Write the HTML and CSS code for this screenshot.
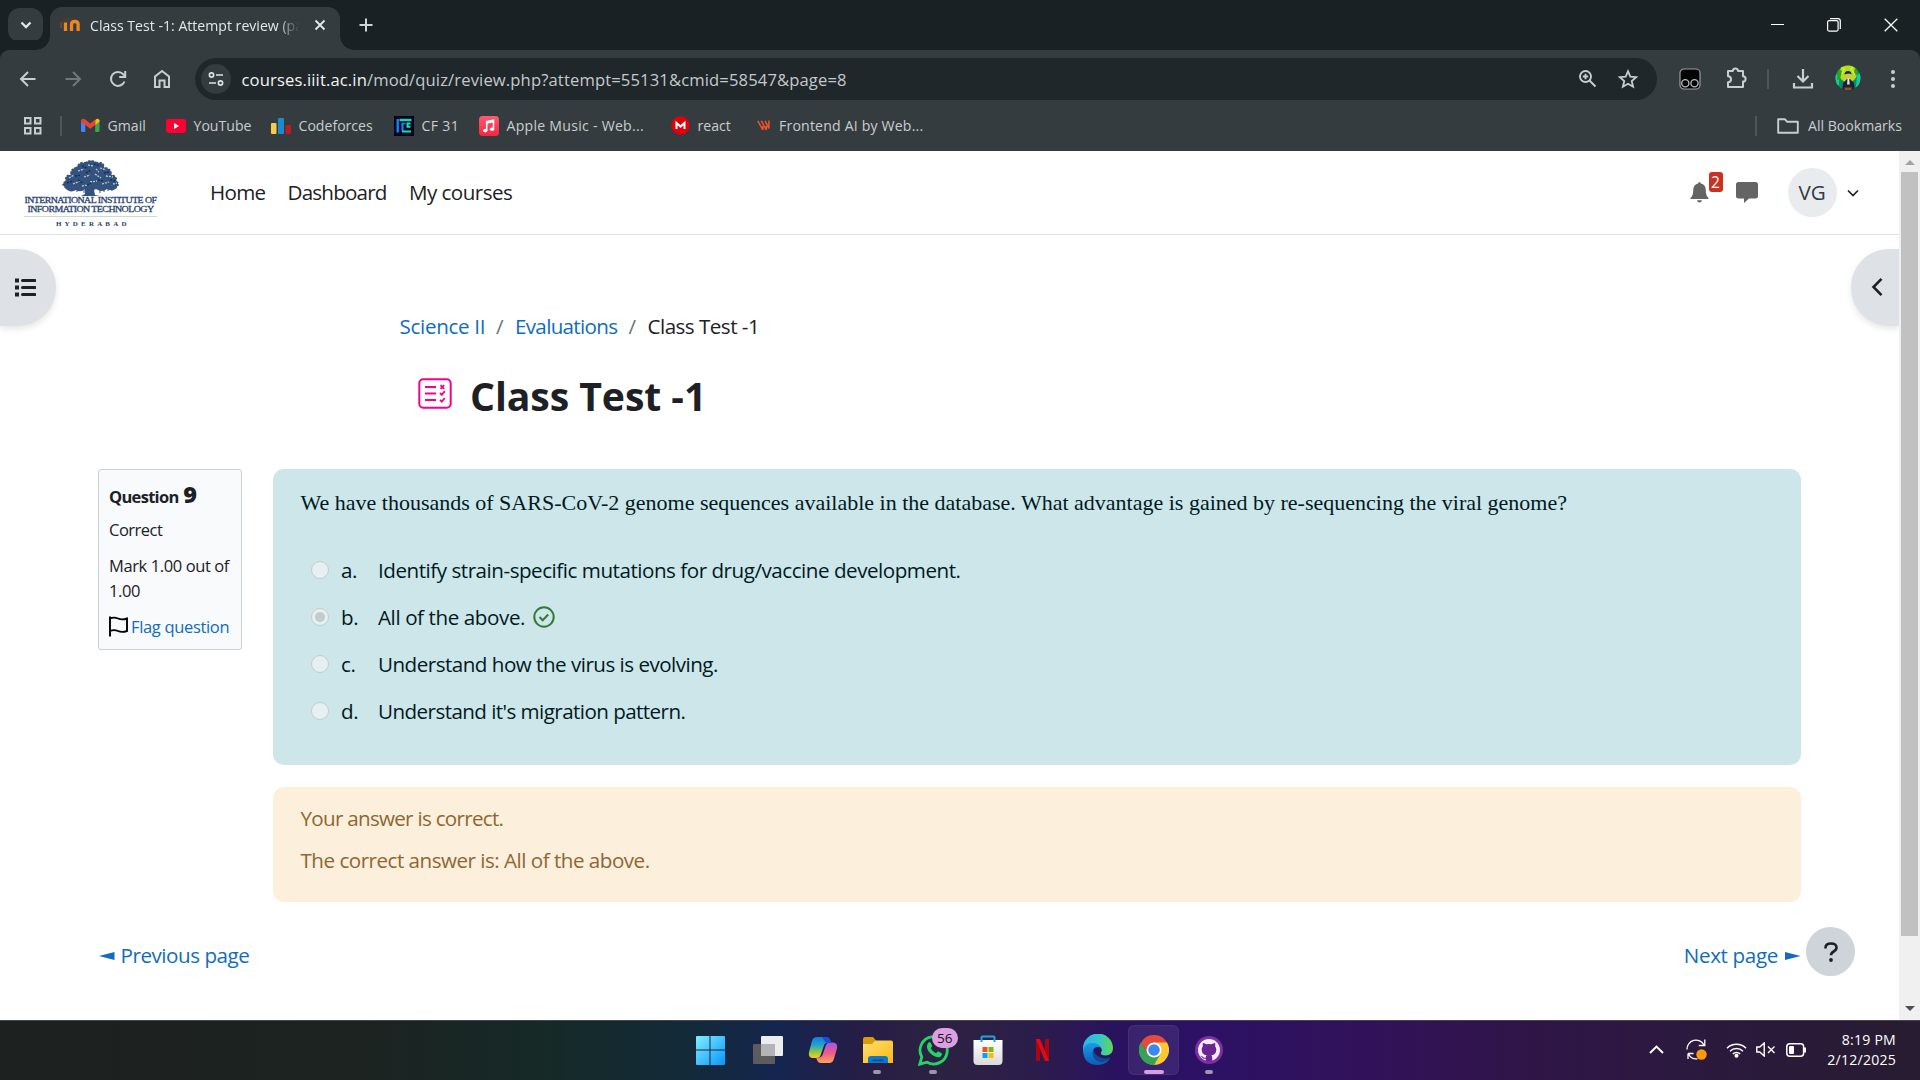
FILE: index.html
```
<!DOCTYPE html>
<html lang="en">
<head>
<meta charset="utf-8">
<title>Class Test -1: Attempt review</title>
<link rel="stylesheet" href="styles.css">
</head>
<body>
<div class="tabstrip">
  <div class="tab-search"><svg width="12" height="8" viewBox="0 0 12 8"><path d="M1.5 1.5L6 6l4.500-4.500" fill="none" stroke="#e3e6e7" stroke-width="2.300"/></svg></div>
  <div class="tab">
    <svg class="favicon" width="21" height="16" viewBox="0 0 21 16"><path d="M0 4.500L7 .5l6 1.500-5 3.500z" fill="#4d3b33"/><path d="M1.200 5v6" stroke="#7a5038" stroke-width="1.200"/><path d="M5.500 14V5.500M11.500 14V7.500q0-3 3.300-3t3.300 3V14" fill="none" stroke="#ef8422" stroke-width="3.300"/></svg>
    <span class="tab-title">Class Test -1: Attempt review (pa</span>
    <svg width="12" height="12" viewBox="0 0 12 12"><path d="M1.500 1.500l9 9m0-9l-9 9" stroke="#e3e6e7" stroke-width="1.900"/></svg>
  </div>
  <svg class="newtab" width="14" height="14" viewBox="0 0 14 14"><path d="M7 .5v13M.5 7h13" stroke="#d0d4d5" stroke-width="2"/></svg>
  <div class="window-buttons">
    <svg width="13" height="13" viewBox="0 0 13 13"><path d="M0 5.500h13" stroke="#fff"/></svg>
    <svg width="14" height="14" viewBox="0 0 14 14"><rect x=".6" y="2.600" width="10.500" height="10.500" rx="1.500" fill="none" stroke="#fff" stroke-width="1.200"/><path d="M3 .7h8q2.300 0 2.300 2.300v8" fill="none" stroke="#fff" stroke-width="1.200"/></svg>
    <svg width="14" height="14" viewBox="0 0 14 14"><path d="M.7.7l12.600 12.600m0-12.600L.7 13.300" stroke="#fff" stroke-width="1.300"/></svg>
  </div>
</div>

<div class="toolbar">
  <div class="nav-icons">
    <svg width="24" height="24" viewBox="0 0 24 24"><path d="M19.500 12H5.500M12 5l-7 7 7 7" fill="none" stroke="#c9cdcf" stroke-width="2"/></svg>
    <svg width="24" height="24" viewBox="0 0 24 24"><path d="M4.500 12h14M12 5l7 7-7 7" fill="none" stroke="#72787b" stroke-width="2"/></svg>
    <svg width="24" height="24" viewBox="0 0 24 24"><path d="M18.500 14.500a7 7 0 1 1-1.300-7.300L19 9" fill="none" stroke="#c9cdcf" stroke-width="2"/><path d="M19.200 4v6h-6" fill="none" stroke="#c9cdcf" stroke-width="2"/></svg>
    <svg width="24" height="24" viewBox="0 0 24 24"><path d="M5 9.500L12 4l7 5.500V20h-4.500v-6.500h-5V20H5z" fill="none" stroke="#c9cdcf" stroke-width="2"/></svg>
  </div>
  <div class="omnibox">
    <span class="site-info"><svg width="16" height="14" viewBox="0 0 16 14"><g fill="none" stroke="#dfe2e3" stroke-width="1.700"><circle cx="3.500" cy="3" r="2.100"/><path d="M8 3h7M1 11h7"/><circle cx="12.500" cy="11" r="2.100"/></g></svg></span>
    <span class="url"><b>courses.iiit.ac.in</b>/mod/quiz/review.php?attempt=55131&amp;cmid=58547&amp;page=8</span>
    <svg class="zoomicon" width="20" height="20" viewBox="0 0 20 20"><g fill="none" stroke="#c9cdcf" stroke-width="1.900"><circle cx="7.500" cy="7.500" r="5.500"/><path d="M11.500 11.500l6 6M7.500 4.800v5.400M4.800 7.500h5.400"/></g></svg>
    <svg width="22" height="22" viewBox="0 0 22 22"><path d="M11 3.200l2.300 5.400 5.900.5-4.500 3.900 1.400 5.700-5.100-3-5.100 3 1.400-5.700-4.500-3.900 5.900-.5z" fill="none" stroke="#c9cdcf" stroke-width="1.800"/></svg>
  </div>
  <svg class="monkey" width="22" height="22" viewBox="0 0 22 22"><rect x="1" y="1" width="20" height="20" rx="4" fill="#050505" stroke="#9b9fa0" stroke-width="1.200"/><g fill="#050505" stroke="#b9bcbd" stroke-width="1.300"><circle cx="6.300" cy="15.300" r="3.600"/><circle cx="15.500" cy="15.300" r="3.600"/></g></svg>
  <svg class="puzzle" width="23" height="24" viewBox="0 0 23 24"><path d="M3 5h4.800a2.600 2.600 0 0 1 5.200 0h5v5.300a2.600 2.600 0 0 1 0 5.200V21H3v-4.700a3 3 0 0 0 0-6z" fill="none" stroke="#c9cdcf" stroke-width="2" stroke-linejoin="round"/></svg>
  <i class="sep"></i>
  <svg class="download" width="22" height="22" viewBox="0 0 22 22"><path d="M11 1v12M5.500 8l5.500 5.500L16.500 8M2 15v4.500h18V15" fill="none" stroke="#c9cdcf" stroke-width="2.200"/></svg>
  <svg class="profile" width="26" height="26" viewBox="0 0 26 26"><defs><clipPath id="pc"><circle cx="13" cy="13" r="12.500"/></clipPath></defs><g clip-path="url(#pc)"><path d="M0 0h26v26H0z" fill="#128a5c"/><circle cx="13" cy="8.500" r="9" fill="#b5dc1e"/><path d="M0 8l4 3v9l-4 2zM22 10l4-3v14l-5 1z" fill="#19c9a4"/><path d="M3 4l4 2-2 8-3 1zM20 3l3 4-2 4-2-4z" fill="#2fa51a"/><path d="M6 2l3 2-2 5M18 2l-2 2 4 6" fill="none" stroke="#d8f03a" stroke-width="1.200"/><path d="M7 26l1-8 4-4h3l4 4 1 8z" fill="#14233a"/><circle cx="13" cy="10" r="2.500" fill="#e0b48c"/><path d="M9.500 9.500q0-3.500 3.500-3.500t3.500 3.500l-2-1-3.500.5z" fill="#16301b"/><path d="M12.500 13.500h1.800l.4 6h-2.600z" fill="#e8e6dc"/><path d="M9 22.500h8l-1 2.500h-6z" fill="#a4481d"/></g></svg>
  <svg class="dots" width="6" height="20" viewBox="0 0 6 20"><g fill="#c9cdcf"><circle cx="3" cy="3" r="2"/><circle cx="3" cy="10" r="2"/><circle cx="3" cy="17" r="2"/></g></svg>
</div>

<div class="bookmarks">
  <svg class="apps" width="20" height="20" viewBox="0 0 20 20"><g fill="none" stroke="#c9cdcf" stroke-width="2"><path d="M2 2h5.500v5.500H2zM12 2h5.500v5.500H12zM2 12h5.500v5.500H2zM12 12h5.500v5.500H12z"/></g></svg>
  <i class="sep"></i>
  <div class="bm bm-gmail"><svg width="19" height="15" viewBox="0 0 19 15"><path d="M0 3v9.500Q0 14 1.500 14H4.300V6z" fill="#4285f4"/><path d="M18.500 3v9.500q0 1.500-1.500 1.500h-2.800V6z" fill="#34a853"/><path d="M14.200 2.200V7l4.300-3.200V2.200q-1.800-2.700-4.300 0z" fill="#fbbc04"/><path d="M0 2.200Q1.700-.5 4.300 1.600l4.950 3.800 4.950-3.800V7l-4.950 3.800L4.300 7 0 3.800z" fill="#ea4335"/></svg><span>Gmail</span></div>
  <div class="bm bm-youtube"><svg width="20" height="14" viewBox="0 0 20 14"><rect width="20" height="14" rx="3" fill="#ff0033"/><path d="M8 4v6l5-3z" fill="#fff"/></svg><span>YouTube</span></div>
  <div class="bm bm-cf"><svg width="20" height="16" viewBox="0 0 20 16"><rect y="5" width="5.500" height="11" rx="1" fill="#f7cb4a"/><rect x="7" y="0" width="6" height="16" rx="1" fill="#1c8bcd"/><rect x="14.500" y="7" width="5.500" height="9" rx="1" fill="#b91c22"/></svg><span>Codeforces</span></div>
  <div class="bm bm-cf31"><svg width="20" height="20" viewBox="0 0 20 20"><rect width="20" height="20" fill="#05051f"/><path d="M3.700 16.500V3" stroke="#1186f5" stroke-width="2.400"/><path d="M5.500 4h12" stroke="#15d8b8" stroke-width="2.400"/><path d="M7.500 7.500h4" stroke="#1186f5" stroke-width="1.600"/><path d="M8.500 7v8" stroke="#1186f5" stroke-width="2.200"/><path d="M16.500 7.500h-3v3.300h3M8 15.500h9" fill="none" stroke="#19e0b4" stroke-width="2"/></svg><span>CF 31</span></div>
  <div class="bm bm-music"><svg width="20" height="20" viewBox="0 0 20 20"><defs><linearGradient id="am" x2="0" y2="1"><stop stop-color="#fb5c74"/><stop offset="1" stop-color="#fa233b"/></linearGradient></defs><rect width="20" height="20" rx="3.500" fill="url(#am)"/><path d="M7.700 14.500V5.700l6.800-1.500v8.800" fill="none" stroke="#fff" stroke-width="1.500"/><path d="M7.700 6.500l6.800-1.400" stroke="#fff" stroke-width="2.600"/><ellipse cx="6.200" cy="14.600" rx="2.200" ry="1.800" fill="#fff"/><ellipse cx="13" cy="13.200" rx="2.200" ry="1.800" fill="#fff"/></svg><span>Apple Music - Web...</span></div>
  <div class="bm bm-react"><svg width="19" height="19" viewBox="0 0 19 19"><circle cx="9.500" cy="9.500" r="9.300" fill="#e3000b"/><path d="M5.500 13V7l4 3.600 4-3.600v6" fill="none" stroke="#fff" stroke-width="2"/></svg><span>react</span></div>
  <div class="bm bm-web"><svg width="13" height="11" viewBox="0 0 13 11"><g fill="none" stroke="#f4512c" stroke-width="1.500"><path d="M.8.8l5 9.200V6"/><path d="M4.300.8l5 9.200V6"/><path d="M8 .8l3.900 7.500V.5"/></g></svg><span>Frontend AI by Web...</span></div>
  <div class="all-bm"><i class="sep"></i><svg width="22" height="16" viewBox="0 0 22 16"><path d="M1.200 1.200h6.600l2.400 2.600h10.600v11H1.200z" fill="none" stroke="#c9cdcf" stroke-width="1.900" stroke-linejoin="round"/></svg><span>All Bookmarks</span></div>
</div>

<div class="viewport">
<div class="page">
  <header class="site-header">
    <svg class="logo" width="140" height="74" viewBox="0 0 140 74">
      <g fill="#34527e">
        <path d="M44 31q-4-3 1-6-1-6 5-7 0-6 6-7 3-6 9-5 6-4 12 0 7-1 8 5 7 1 7 7 6 2 5 7 4 3 0 7-5 4-10 1-5 4-11 0l-2 1 1 5 5 1H61l4-2v-5q-4 4-9 1-6 4-12-3z"/>
        <path d="M53 30v5M57 32v4M84 31v5M92 30v5M64 33v4M80 33v4M49 31v3M88 32v3" stroke="#34527e" stroke-width="1"/>
      </g>
      <path d="M44 31q-4-3 1-6-1-6 5-7 0-6 6-7 3-6 9-5 6-4 12 0 7-1 8 5 7 1 7 7 6 2 5 7 4 3 0 7" fill="none" stroke="#fff" stroke-width="1.600" stroke-dasharray="1.500 2.500"/>
      <path d="M49 22l5-3M58 15l6-2M68 9l5 1M80 12l6 2M86 20l7 1M53 28l7-3M64 21l6-2M75 18l6 4M70 26l7-1M82 28l7-2M62 30l5-1M93 28l4-1M76 13l3 3" stroke="#b9c5d6" stroke-width="1.300" stroke-dasharray="2 1" fill="none"/>
      <path d="M47 27l6-2M55 20l6-1M62 10l5 2M74 8l6 2M84 17l5-1M90 24l6 1M66 17l5-3M58 24l5 3M78 24l6 1M67 29l4-2" stroke="#12305c" stroke-width="1.500" stroke-dasharray="2 1" fill="none"/>
      <g fill="#27436f" font-family="Liberation Serif, serif">
        <text x="4.500" y="46.500" font-size="9" stroke="#27436f" stroke-width=".3" textLength="132" lengthAdjust="spacingAndGlyphs">INTERNATIONAL INSTITUTE OF</text>
        <text x="7.500" y="56" font-size="9" stroke="#27436f" stroke-width=".3" textLength="126" lengthAdjust="spacingAndGlyphs">INFORMATION TECHNOLOGY</text>
        <text x="36" y="69.500" font-size="7" font-weight="bold" textLength="70">HYDERABAD</text>
      </g>
      <path d="M4 60.500h133" stroke="#c9dcc9"/>
    </svg>
    <nav class="primary-nav"><a class="n1">Home</a><a class="n2">Dashboard</a><a class="n3">My courses</a></nav>
    <div class="user-tools">
      <div class="bell"><svg width="19" height="21" viewBox="0 0 19 21"><path d="M9.500 0q1.300 0 1.300 1.500 5 1 5 7 0 5.500 2.700 7.500v1H.5v-1q2.700-2 2.700-7.500 0-6 5-7Q8.200 0 9.500 0zM7 18.200h5q-.3 2.300-2.500 2.300T7 18.200z" fill="#646464"/></svg><span class="badge">2</span></div>
      <svg class="chat" width="22" height="21" viewBox="0 0 22 21"><path d="M2.500 0h17Q22 0 22 2.500v11.500q0 2.500-2.500 2.500H13l-5 4.500v-4.500H2.500Q0 16.500 0 14V2.500Q0 0 2.500 0z" fill="#646464"/></svg>
      <span class="avatar">VG</span>
      <svg width="12" height="8" viewBox="0 0 12 8"><path d="M1 1.500l5 5 5-5" fill="none" stroke="#1d2125" stroke-width="1.700"/></svg>
    </div>
  </header>

  <div class="drawer-btn left"><svg width="21" height="19" viewBox="0 0 21 19"><path d="M0 2.500h4M0 9.500h4M0 16.500h4" stroke="#1d2125" stroke-width="4.200"/><path d="M7.500 2.500h12.500M7.500 9.500h12.500M7.500 16.500h12.500" stroke="#1d2125" stroke-width="3" stroke-linecap="round"/></svg></div>
  <div class="drawer-btn right"><svg width="12" height="20" viewBox="0 0 12 20"><path d="M10.500 1.800L2.500 10l8 8.200" fill="none" stroke="#1d2125" stroke-width="2.600"/></svg></div>

  <div class="breadcrumb"><a class="c1">Science II</a><i>/</i><a class="c2">Evaluations</a><i>/</i><span class="c3">Class Test -1</span></div>
  <h1><svg width="34" height="31" viewBox="0 0 34 31"><g fill="none" stroke="#f90086" stroke-width="2"><rect x="1.300" y="1.300" width="31.400" height="28.400" rx="4"/><path d="M7 9h11M7 15.500h11M7 22h11"/><path d="M22.500 7.200l3.600 3.600m0-3.600l-3.600 3.600M22 15l1.800 1.800 3-3.600M22 21.800l1.800 1.800 3-3.600" stroke-width="1.800"/></g></svg><span>Class Test -1</span></h1>

  <div class="question">
    <aside class="info">
      <h3>Question <b>9</b></h3>
      <div class="state">Correct</div>
      <div class="grade">Mark 1.00 out of<br>1.00</div>
      <div class="flag"><svg width="19" height="21" viewBox="0 0 19 21"><path d="M1 .5v20M1 2.500q4-1.800 8 0t9 0v12.500q-5 1.800-9 0t-8 0" fill="none" stroke="#000" stroke-width="1.900"/></svg><a>Flag question</a></div>
    </aside>
    <div class="content">
      <section class="formulation">
        <p class="qtext">We have thousands of SARS-CoV-2 genome sequences available in the database. What advantage is gained by re-sequencing the viral genome?</p>
        <div class="answers">
          <div class="opt"><i class="radio"></i><b>a.</b><span class="o1">Identify strain-specific mutations for drug/vaccine development.</span></div>
          <div class="opt"><i class="radio on"></i><b>b.</b><span class="o2">All of the above.</span><svg width="22" height="22" viewBox="0 0 22 22"><g fill="none" stroke="#357a32" stroke-width="2"><circle cx="11" cy="11" r="9.700"/><path d="M6.500 11l3.200 3.200 5.500-5.700"/></g></svg></div>
          <div class="opt"><i class="radio"></i><b>c.</b><span class="o3">Understand how the virus is evolving.</span></div>
          <div class="opt"><i class="radio"></i><b>d.</b><span class="o4">Understand it's migration pattern.</span></div>
        </div>
      </section>
      <section class="outcome"><p class="f1">Your answer is correct.</p><p class="f2">The correct answer is: All of the above.</p></section>
    </div>
  </div>
  <div class="pager">
    <a class="prev"><svg width="16" height="8" viewBox="0 0 16 8"><path d="M0 4l15.500-4v8z" fill="#0f6cbf"/></svg>Previous page</a>
    <a class="next">Next page<svg width="16" height="8" viewBox="0 0 16 8"><path d="M15.500 4L0 0v8z" fill="#0f6cbf"/></svg></a>
  </div>
  <div class="help"><svg width="14" height="20" viewBox="0 0 14 20"><path d="M1.500 6.500V5.800Q1.500 1.500 7 1.500t5.500 4q0 2.500-2.800 4Q7 11 7 13.300" fill="none" stroke="#1d2125" stroke-width="2.600"/><circle cx="7" cy="18" r="1.900" fill="#1d2125"/></svg></div>
</div>
<div class="scrollbar"><i class="arrow up"></i><i class="thumb"></i><i class="arrow down"></i></div>
</div>

<footer class="taskbar">
  <div class="apps-row">
    <div class="app"><svg width="30" height="30" viewBox="0 0 30 30"><defs><linearGradient id="w" x2="1" y2="1"><stop stop-color="#7ff0fd"/><stop offset="1" stop-color="#0b93fb"/></linearGradient></defs><path d="M0 2q0-1 1-1h12.500v13.500H0zM14.500 1H28q1 0 1 1v12.500H14.500zM0 15.500h13.500V30H1q-1 0-1-1zM14.500 15.500H29V29q0 1-1 1H14.500z" fill="url(#w)"/></svg></div>
    <div class="app"><svg class="nudge" width="30" height="30" viewBox="0 0 30 30"><rect x="0" y="9" width="22" height="20" rx="1" fill="#5c5c5e"/><rect x="8" y="1" width="22" height="20" rx="1" fill="#ededee"/><path d="M8 9h14v12H8z" fill="#b4b4b6"/></svg></div>
    <div class="app"><svg class="nudge" width="30" height="28" viewBox="0 0 30 28"><defs><linearGradient id="c1" x2="0" y2="1"><stop stop-color="#1c74e8"/><stop offset=".4" stop-color="#22a8c9"/><stop offset=".75" stop-color="#9bcb3b"/><stop offset="1" stop-color="#ffcb1f"/></linearGradient><linearGradient id="c2" x2="0" y2="1"><stop stop-color="#a256e8"/><stop offset=".5" stop-color="#ec5a8f"/><stop offset="1" stop-color="#ffa24e"/></linearGradient></defs><path d="M9 1h9q3 0 4 3l1 3h-4q-2.500 0-3.200 3L13 18q-1 4-4 4H5q-5 0-4-6L4 5q1-4 5-4z" fill="url(#c1)"/><path d="M21 27h-8q-3 0-4-3l-1-2.500h3q3 0 4-4l3-8.500q.8-2.500 3.500-2.500H25q5 0 4 6l-3 10q-1 4.500-5 4.500z" fill="url(#c2)"/><path d="M14 1h4q3 0 4 3l1 3h-4q-2 0-3-3z" fill="#184fd0"/></svg></div>
    <div class="app run"><svg class="nudge" width="30" height="28" viewBox="0 0 30 28"><defs><linearGradient id="f" x2="1" y2="1"><stop stop-color="#ffdf72"/><stop offset="1" stop-color="#f9b912"/></linearGradient></defs><path d="M0 3q0-2 2-2h8l3 3.500-3 4H0z" fill="#dc9a0b"/><path d="M0 8h9l3.500-3.500H28q2 0 2 2V27H0z" fill="url(#f)"/><path d="M5 27v-4q0-3 3-3h14q3 0 3 3v4z" fill="#0f78cc"/><path d="M9.500 23.500h11v1.800h-11z" fill="#0a4f92"/></svg></div>
    <div class="app run"><svg class="nudge" width="32" height="32" viewBox="0 0 32 32"><path d="M1.800 30.200l2-7.200A13.600 13.600 0 1 1 9 28.200z" fill="none" stroke="#25d366" stroke-width="2.800"/><path d="M9.500 10q1.500-3 3-1.500l1.800 3.500-1.600 2.300q1.800 3.500 5.300 5l2-2 3.700 2q1 1.500-1 3.200-3 2.200-8-1.300t-5.700-7.700q-.2-2 .5-3.500z" fill="#25d366"/></svg><span class="count">56</span></div>
    <div class="app"><svg width="30" height="30" viewBox="0 0 30 30"><defs><linearGradient id="s" x2="0" y2="1"><stop stop-color="#fff"/><stop offset="1" stop-color="#d9d9d9"/></linearGradient></defs><path d="M.5 5h29v21q0 4-4 4h-21q-4 0-4-4z" fill="url(#s)"/><path d="M8.500 7V2.500q0-1 1-1h11q1 0 1 1V7" fill="none" stroke="#1fa3e6" stroke-width="2"/><path d="M9.500 12h5v5h-5z" fill="#f25022"/><path d="M15.500 12h5v5h-5z" fill="#7fba00"/><path d="M9.500 18h5v5h-5z" fill="#00a4ef"/><path d="M15.500 18h5v5h-5z" fill="#ffb900"/></svg></div>
    <div class="app"><svg width="13" height="22" viewBox="0 0 13 22"><path d="M0 0h4v22H0zM9 0h4v22H9z" fill="#a80710"/><path d="M0 0h4l9 22H9z" fill="#e50914"/></svg></div>
    <div class="app"><svg width="32" height="32" viewBox="0 0 32 32"><defs><linearGradient id="e1" x2="1"><stop stop-color="#2bb3ee"/><stop offset=".55" stop-color="#36c6c9"/><stop offset="1" stop-color="#62d84e"/></linearGradient><linearGradient id="e2" x2="0" y2="1"><stop stop-color="#1b9be8"/><stop offset="1" stop-color="#0a5cb5"/></linearGradient></defs><path d="M1 15A15 15 0 0 1 31 14q0 7-7 7.500-6 0-5-3 2-3-1-6-3-2.500-8-1Q3 12.500 1 18z" fill="url(#e1)"/><path d="M1 17q1-8 9-8 7 0 8.500 4.500-6-2-7.500 3.500-1 7 5 10 6 2.500 12-2.500Q24 31 16 31 2 31 1 17z" fill="url(#e2)"/><path d="M11.500 15q-3 8 4 12 6 2.500 12.500-2.500.5-1-.5-1-5 2-10-.5T11.500 15z" fill="#0f4a92"/></svg></div>
    <div class="app run active"><svg width="30" height="30" viewBox="0 0 48 48"><path d="M24 24L3.200 12A24 24 0 0 1 44.800 12z" fill="#e33b2e"/><path d="M24 24V12h20.800A24 24 0 0 1 24 48z" fill="#fcc31f"/><path d="M24 48A24 24 0 0 1 3.200 12L14 30l10 6 4 2z" fill="#259b48"/><path d="M3.200 12l10.400 18L24 24V12z" fill="#e33b2e"/><path d="M3.200 12A24 24 0 0 0 24 48l10.400-18L24 34l-10.400-4z" fill="#259b48"/><circle cx="24" cy="24" r="12" fill="#fff"/><circle cx="24" cy="24" r="9.300" fill="#2d7df0"/></svg></div>
    <div class="app run"><svg width="28" height="28" viewBox="0 0 28 28"><circle cx="14" cy="14" r="14" fill="#7d2fa3"/><circle cx="14" cy="14" r="11" fill="#f3ecf7"/><path d="M8 7q2 .2 3.500 1.300 2.500-.6 5 0Q18 7.200 20 7q.6 1.700.1 3.200 1.200 1.300 1.200 3.300 0 5-5 5.800.9.800.9 2.500v3.400h-6.400v-2.500q-3 .6-4-1.800l-1.300-1.200q1.800-.2 2.800 1.500.9 1 2.500.5 0-1.500.9-2.400-5-.8-5-5.800 0-2 1.200-3.300Q7.400 8.700 8 7z" fill="#6a2592"/></svg></div>
  </div>
  <div class="tray">
    <svg class="t-up" width="15" height="9" viewBox="0 0 15 9"><path d="M1 8l6.500-6.500L14 8" fill="none" stroke="#fff" stroke-width="1.900"/></svg>
    <svg class="t-sync" width="21" height="21" viewBox="0 0 21 21"><path d="M1 10.500A9 9 0 0 1 18 6M18.800.5v6h-6M2 14.500v5.500M2 14.500h5.500M2.500 15a9 9 0 0 0 9 4.800" fill="none" stroke="#fff" stroke-width="1.300"/><circle cx="15.500" cy="15.500" r="5.200" fill="#ff9a0c"/></svg>
    <svg class="t-wifi" width="21" height="16" viewBox="0 0 21 16"><g fill="none" stroke="#fff" stroke-width="1.500"><path d="M1 6.200a13.400 13.400 0 0 1 19 0M4 9.200a9.200 9.200 0 0 1 13 0M6.800 12a5.200 5.200 0 0 1 7.400 0"/></g><circle cx="10.500" cy="13.800" r="2" fill="#fff"/></svg>
    <svg class="t-vol" width="20" height="15" viewBox="0 0 20 15"><path d="M.8 5h3L8.200 1v13L3.800 10h-3zM12 4.500l6.500 6.500m0-6.500L12 11" fill="none" stroke="#fff" stroke-width="1.400"/></svg>
    <svg class="t-bat" width="21" height="14" viewBox="0 0 21 14"><rect x=".8" y=".8" width="16.800" height="12.400" rx="3" fill="none" stroke="#fff" stroke-width="1.500"/><rect x="3" y="3" width="5" height="8" rx="1" fill="#fff"/><path d="M19 4.500v5" stroke="#fff" stroke-width="2"/></svg>
    <div class="clock"><span>8:19 PM</span><span>2/12/2025</span></div>
  </div>
</footer>
</body>
</html>
```
FILE: styles.css
```
* { box-sizing: border-box; }
html, body { margin: 0; height: 1080px; overflow: hidden; }
body { font-family: "Open Sans", "Noto Sans", sans-serif; background: #fff; color: #1d2125; display: flex; flex-direction: column; width: 1920px; }
svg { display: block; flex: none; }
i { font-style: normal; }
p, h1, h3 { margin: 0; }
span, a { white-space: nowrap; }

/* Tab strip */
.tabstrip { height: 50px; flex: none; background: #1a2124; display: flex; align-items: center; }
.tab-search { width: 35px; height: 34px; margin-left: 8px; border-radius: 12px; background: #353c3f; display: flex; align-items: center; justify-content: center; }
.tab { position: relative; align-self: flex-end; width: 290px; height: 43px; margin-left: 7px; padding: 0 14px 7px 10px; border-radius: 12px 12px 0 0; background: #353c3f; display: flex; align-items: center; }
.tab::before, .tab::after { content: ""; position: absolute; bottom: 0; width: 14px; height: 14px; }
.tab::before { left: -14px; background: radial-gradient(circle at 0 0, transparent 13.5px, #353c3f 14px); }
.tab::after { right: -14px; background: radial-gradient(circle at 100% 0, transparent 13.5px, #353c3f 14px); }
.tab-title { width: 220px; margin-left: 9px; margin-right: 5px; font-size: 14.1px; color: #e3e6e7; mask-image: linear-gradient(90deg, #000 86%, transparent 96%); }
.tab svg:last-child { margin-left: 1px; }
.newtab { margin-left: 19px; }
.window-buttons { margin-left: auto; margin-right: 22px; display: flex; align-items: center; gap: 43px; }

/* Toolbar */
.toolbar { height: 58px; flex: none; background: #353c3f; border-radius: 9px 9px 0 0; box-shadow: 0 -10px 0 0 #1a2124; display: flex; align-items: center; }
.tab { z-index: 1; }
.nav-icons { display: flex; gap: 20.8px; margin-left: 16px; width: 179px; }
.omnibox { width: 1462px; height: 42px; border-radius: 21px; background: #1f272a; display: flex; align-items: center; padding: 0 18.5px 0 6px; }
.site-info { width: 30px; height: 30px; border-radius: 50%; background: #353c3f; display: flex; align-items: center; justify-content: center; }
.url { margin-left: 10.5px; font-size: 16.6px; letter-spacing: .13px; color: #c5c9cb; flex: 1; }
.url b { font-weight: 400; color: #f1f3f3; }
.zoomicon { margin-right: 19px; }
.sep { width: 2px; height: 20px; background: #4f5659; flex: none; }
.monkey { margin-left: 22px; }
.puzzle { margin-left: 24px; margin-top: -3px; }
.toolbar .sep { margin-left: 19px; }
.download { margin-left: 22.5px; }
.profile { margin-left: 21px; margin-top: -2px; }
.dots { margin-left: 29px; margin-top: -1px; }

/* Bookmarks bar */
.bookmarks { height: 43px; flex: none; background: #353c3f; display: flex; align-items: center; padding: 0 18px 8px 22.5px; }
.bookmarks > .sep { margin-left: 17.5px; }
.bm { display: flex; align-items: center; font-size: 14.1px; color: #c9cdcf; }
.bm svg { margin-right: 7.5px; }
.bm-gmail { width: 85px; margin-left: 19px; }
.bm-youtube { width: 105px; }
.bm-cf { width: 123px; }
.bm-cf31 { width: 85px; letter-spacing: .35px; }
.bm-music { width: 192px; letter-spacing: .26px; }
.bm-react { width: 86px; }
.bm-web { letter-spacing: .18px; }
.bm-web svg { margin-right: 9px; }
.all-bm { margin-left: auto; display: flex; align-items: center; font-size: 14.1px; color: #c9cdcf; }
.all-bm svg { margin: 0 9px 0 20px; }

/* Course page */
.viewport { height: 869px; flex: none; display: flex; }
.page { position: relative; width: 1899px; height: 869px; overflow: hidden; font-size: 20.6px; line-height: 33px; letter-spacing: -.5px; }
.site-header { height: 84px; border-bottom: 1px solid #dee2e6; display: flex; align-items: center; }
.logo { margin-left: 20px; margin-top: 0; }
.primary-nav { display: flex; margin-left: 50px; }
.n1 { width: 77.5px; letter-spacing: -.7px; }
.n2 { width: 121.5px; letter-spacing: -.8px; }
.n3 { letter-spacing: -.55px; }
.user-tools { margin-left: auto; margin-right: 40px; display: flex; align-items: center; }
.bell { position: relative; margin-right: 27px; }
.badge { position: absolute; left: 19px; top: -10px; width: 14px; height: 20px; border-radius: 3px; background: #ca3120; color: #fff; font-size: 15.500px; line-height: 20px; text-align: center; letter-spacing: 0; }
.avatar { width: 49px; height: 49px; border-radius: 50%; background: #e9ecef; color: #343a40; margin-left: 30px; margin-right: 10.5px; display: flex; align-items: center; justify-content: center; letter-spacing: -.2px; }
.drawer-btn { position: absolute; top: 98px; height: 77px; background: #dee2e6; display: flex; align-items: center; padding-bottom: 1px; box-shadow: 0 3px 6px rgba(0,0,0,.1); }
.drawer-btn.left { left: 0; width: 56px; padding-left: 15px; border-radius: 0 38px 38px 0; }
.drawer-btn.right { right: 0; width: 48px; padding-left: 19.5px; border-radius: 38px 0 0 38px; }
.breadcrumb { margin-top: 75px; margin-left: 399.5px; display: flex; }
.breadcrumb a, .pager a, .flag a { color: #0f6cbf; }
.breadcrumb i { width: 31px; text-align: center; color: #6a737b; }
.c1 { width: 84.5px; letter-spacing: -.32px; }
.c2 { width: 101.500px; letter-spacing: -.68px; }
.c3 { letter-spacing: -.52px; }
h1 { margin: 28px 0 0 418px; height: 50px; display: flex; align-items: center; font-size: 39.2px; line-height: 50px; letter-spacing: -.08px; }
h1 svg { margin-right: 18px; margin-top: -5px; }

.question { display: flex; margin: 48px 0 0 98px; }
.info { width: 144px; height: 181px; border: 1px solid #cad0d7; border-radius: 3px; background: #f8fafc; padding: 8px 0 0 10px; font-size: 16.5px; line-height: 25px; }
.info h3 { font-size: 16.5px; line-height: 33px; letter-spacing: -.7px; }
.info h3 b { font-size: 23.500px; margin-left: 1px; }
.state { margin-top: 4px; }
.grade { margin-top: 11px; letter-spacing: -.4px; }
.flag { margin-top: 11px; display: flex; align-items: center; letter-spacing: -.33px; }
.flag svg { margin-right: 3px; }
.content { margin-left: 31px; width: 1528px; }
.formulation { height: 296px; border-radius: 11px; background: #cde6ea; color: #001a1e; padding: 17px 0 0 27.5px; }
.qtext { font: 22px/33px "Liberation Serif", "Times New Roman", serif; letter-spacing: 0; white-space: nowrap; }
.answers { margin-top: 28px; padding-left: 10.5px; }
.opt { height: 47px; display: flex; align-items: center; letter-spacing: -.455px; }
.opt b { font-weight: 400; width: 37px; margin-left: 12px; }
.opt svg { margin-left: 8px; margin-top: -1px; }
.o1 { letter-spacing: -.47px; }
.o2 { letter-spacing: -.41px; }
.o3 { letter-spacing: -.51px; }
.o4 { letter-spacing: -.565px; }
.radio { width: 18px; height: 18px; margin-top: -1px; border-radius: 50%; border: 1.5px solid #c3cdd0; background: #e6eff1; }
.radio.on { background: radial-gradient(circle, #c3cccc 4.5px, #e6eff1 5.500px); }
.outcome { height: 115px; margin-top: 22px; border-radius: 11px; background: #fcefdc; color: #8f6631; padding: 15px 0 0 27.5px; }
.f1 { letter-spacing: -.71px; }
.f2 { margin-top: 9px; }
.pager { display: flex; justify-content: space-between; margin: 37px 98px 0 99px; }
.pager a { display: flex; align-items: center; }
.prev { letter-spacing: -.46px; }
.prev svg { margin-right: 5.5px; }
.next { letter-spacing: -.35px; }
.next svg { margin-left: 7px; }
.help { position: absolute; left: 1806px; top: 776px; width: 49px; height: 49px; border-radius: 50%; background: #ced4da; display: flex; align-items: center; justify-content: center; }

.scrollbar { width: 21px; background: #f0f0f0; display: flex; flex-direction: column; align-items: center; }
.arrow { border: 5px solid transparent; }
.arrow.up { margin: 4px 0 7px; border-bottom-color: #a3a3a3; }
.thumb { width: 17px; height: 764px; background: #c1c1c1; }
.arrow.down { margin-top: auto; margin-bottom: 4px; border-top-color: #505050; }

/* Taskbar */
.taskbar { height: 60px; flex: none; display: flex; align-items: center; padding-bottom: 2px; border-top: 1px solid #45434f; background: linear-gradient(90deg, #1d211f 0, #1c2321 360px, #152a28 560px, #132a3a 690px, #15254f 780px, #251d45 860px, #2c2241 940px, #2b1d4a 1030px, #2a1260 1120px, #2c1165 1200px, #321257 1400px, #2f1548 1520px, #2c193f 1680px, #271c31 1920px); }
.apps-row { display: flex; margin-left: 683.5px; }
.app { position: relative; width: 55.3px; height: 50px; display: flex; align-items: center; justify-content: center; }
.nudge { margin-left: 2.500px; }
.run::after { content: ""; position: absolute; left: 24px; bottom: 1px; width: 8px; height: 4px; border-radius: 2px; background: #9c95ab; }
.active::before { content: ""; position: absolute; inset: 0 2.500px; border-radius: 6px; background: rgba(255,255,255,.08); border: 1px solid rgba(255,255,255,.06); }
.active::after { left: 18px; width: 20px; background: #d89ee2; }
.count { position: absolute; left: 27px; top: 3px; width: 26px; height: 20px; border-radius: 10px; background: #dd9fe4; color: #111; font-size: 13.500px; line-height: 20px; text-align: center; }
.tray { margin-left: auto; margin-right: 24px; display: flex; align-items: center; }
.t-sync { margin-left: 22px; }
.t-wifi { margin-left: 19px; }
.t-vol { margin-left: 9px; }
.t-bat { margin-left: 10px; }
.clock { width: 89px; display: flex; flex-direction: column; align-items: flex-end; color: #fff; font-size: 14.1px; line-height: 20px; letter-spacing: .22px; }
```
